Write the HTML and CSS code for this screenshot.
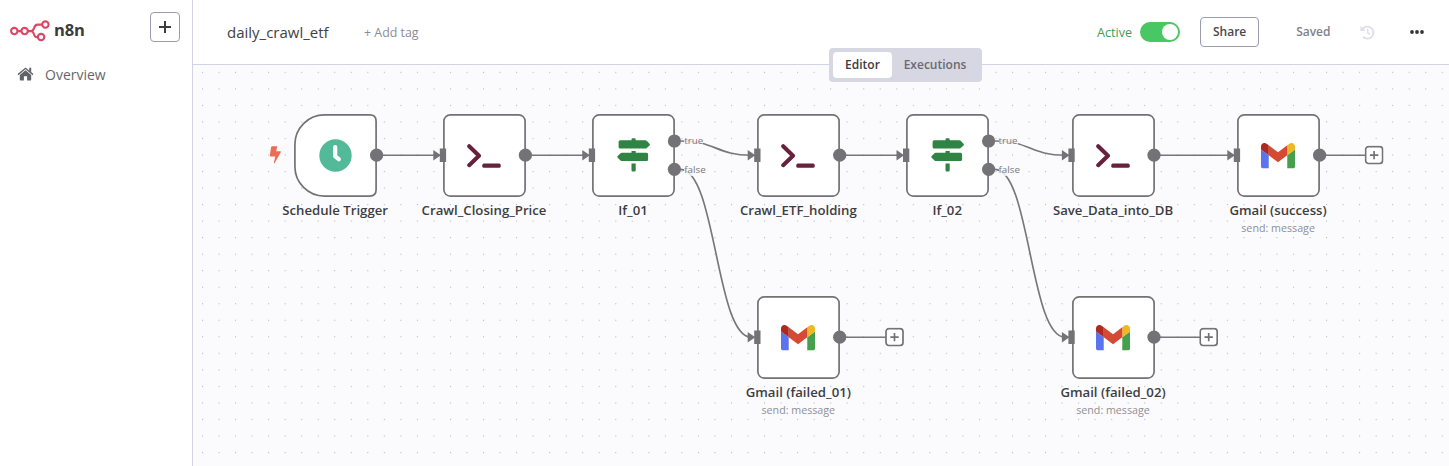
FILE: index.html
```html
<!DOCTYPE html>
<html lang="en">
<head>
<meta charset="utf-8">
<title>daily_crawl_etf - n8n</title>
<link rel="stylesheet" href="styles.css">
</head>
<body>
<svg class="defs" width="0" height="0" aria-hidden="true">
  <defs>
    <symbol id="code" viewBox="0 0 34 24"><path d="M2.2 2.2 12 11.8 2.2 21.2" fill="none" stroke="#66213c" stroke-width="4" stroke-linecap="round" stroke-linejoin="round"/><rect x="15.3" y="19.5" width="18.4" height="4.2" rx="1.5" fill="#66213c"/></symbol>
    <symbol id="signs" viewBox="0 0 33 34"><path fill="#2f8443" d="M14.5 2.2V1.4Q14.5.3 15.6.3h2q1.1 0 1.1 1.1v.8h9.6q.8 0 1.4.6l2.8 3q.8.9 0 1.8l-2.8 2.500q-.6.5-1.400.5H3.200q-1.600 0-1.600-1.600V3.800Q1.600 2.200 3.200 2.200zM14.500 14.700v-1.800h4.200v1.800h10.800q1.600 0 1.600 1.600v5.100q0 1.600-1.600 1.600H4.900q-.8 0-1.400-.6L.7 19.700q-.8-.9 0-1.800l2.800-2.600q.6-.6 1.400-.6zM14.500 25.500h4.200v6.800q0 1.300-1.300 1.300h-1.600q-1.300 0-1.300-1.300z"/></symbol>
    <symbol id="gmail" viewBox="52 42 88 66"><path fill="#5b74ee" d="M58 108h14V74L52 59v43c0 3.320 2.690 6 6 6"/><path fill="#459f4c" d="M120 108h14c3.320 0 6-2.690 6-6V59l-20 15"/><path fill="#edb824" d="M120 48v26l20-15v-8c0-7.420-8.470-11.650-14.400-7.200"/><path fill="#d54a34" d="M72 74V48l24 18 24-18v26L96 92"/><path fill="#ae2a20" d="M52 51v8l20 15V48l-5.600-4.200c-5.940-4.450-14.400-.22-14.400 7.200"/></symbol>
    <symbol id="clock" viewBox="0 0 33 33"><circle cx="16.500" cy="16.500" r="16.200" fill="#52ba98"/><path d="M16.200 8v9.300l3.600 2.900" fill="none" stroke="#fff" stroke-width="4.200" stroke-linecap="round" stroke-linejoin="round"/></symbol>
    <symbol id="box" viewBox="0 0 83 83"><rect x=".9" y=".9" width="81.200" height="81.200" rx="6.300" fill="#fff" stroke="#727277" stroke-width="1.700"/></symbol>
    <symbol id="trigger-box" viewBox="0 0 83 83"><path d="M30.500.9h45.300q6.300 0 6.300 6.300v68.600q0 6.300-6.300 6.300H30.500A29.600 29.600 0 0 1 .9 52.500v-22A29.600 29.600 0 0 1 30.500.9z" fill="#fff" stroke="#727277" stroke-width="1.700"/></symbol>
    <symbol id="input" viewBox="0 0 14 14" overflow="visible"><path d="M.5 1.800 7 6.200V.2h6.300v13.600H7v-6L.5 12.200z" fill="#727277"/></symbol>
    <symbol id="add" viewBox="0 0 19 19"><rect x="1" y="1" width="17" height="17" rx="3" fill="#fff" stroke="#727277" stroke-width="1.700"/><path d="M9.500 5.300v8.400M5.300 9.500h8.400" stroke="#727277" stroke-width="1.700"/></symbol>
    <pattern id="dots" x="202" y="71.800" width="16.530" height="16.530" patternUnits="userSpaceOnUse"><circle cx=".6" cy=".6" r=".55" fill="#a2a3ac"/></pattern>
  </defs>
</svg>
<div class="app">
  <aside class="sidebar">
    <div class="brand-row">
      <div class="brand">
        <svg width="40" height="22" viewBox="0 0 40 22" fill="none" stroke="#dc4767" stroke-width="2.100"><circle cx="4.300" cy="11.100" r="3.200"/><circle cx="14.600" cy="11.100" r="3.200"/><circle cx="35.400" cy="4.600" r="3.200"/><circle cx="31.100" cy="17.100" r="3.200"/><path d="M7.600 11.100h3.700M17.900 11.100h3.200c3.800 0 2-6.500 6.400-6.500H32M21.100 11.100c3.700 0 2 6 5.400 6h1.300"/></svg>
        <span class="brand-name">n8n</span>
      </div>
      <button class="new-button"><svg width="14" height="14" viewBox="0 0 14 14"><path d="M7 1v12M1 7h12" stroke="#3d3d40" stroke-width="2"/></svg></button>
    </div>
    <a class="nav-item">
      <svg width="17" height="14" viewBox="0 0 17 14" fill="#626369"><path d="M8.500 3.200 14.200 8v4.800q0 .7-.7.700h-3.400V9.200H6.900v4.300H3.500q-.7 0-.7-.7V8z"/><path d="M1 7.600 8.500 1.300l7.500 6.300" fill="none" stroke="#626369" stroke-width="1.400"/><path d="M12.200.8h2v4.600l-2-1.700z"/></svg>
      <span>Overview</span>
    </a>
  </aside>
  <main class="main">
    <header class="header">
      <span class="title">daily_crawl_etf</span>
      <span class="add-tag">+ Add tag</span>
      <div class="actions">
        <span class="active-label">Active</span>
        <span class="toggle"><span class="knob"></span></span>
        <button class="share">Share</button>
        <span class="saved">Saved</span>
        <svg class="history" width="15" height="15" viewBox="0 0 15 15" fill="none" stroke="#dddee8"><path d="M2.700 3.900A6 6 0 1 1 3 11.700" stroke-width="1.900"/><path d="M.5 1v5h5z" fill="#dddee8" stroke="none"/><path d="M7.700 4v3.900l2.200 1.500" stroke-width="1.500"/></svg>
        <svg class="more" width="14" height="4" viewBox="0 0 14 4" fill="#363638"><circle cx="2" cy="2" r="1.900"/><circle cx="7" cy="2" r="1.900"/><circle cx="12" cy="2" r="1.900"/></svg>
      </div>
      <nav class="tabs"><span class="tab tab-current">Editor</span><span class="tab">Executions</span></nav>
    </header>
    <section class="canvas">
      <svg class="layer" viewBox="193 65 1256 401">
        <rect x="193" y="65" width="1256" height="401" fill="url(#dots)"/>
        <g fill="none" stroke="#77777b" stroke-width="1.650">
          <path d="M377 155.200h60M526 155.200h60M840 155.200h60M1154 155.200h77M1320 155.200h46M840 337.200h46M1154 337.200h46"/>
          <path d="M674.500 141h6C716 141 716 155.200 751 155.200M989 141h6C1030 141 1030 155.200 1065 155.200"/>
          <path d="M674.500 169.300h6C716 169.300 716 337.200 751 337.200M989 169.300h6C1030 169.300 1030 337.200 1065 337.200"/>
        </g>
      </svg>
      <span class="edge-label true-1">true</span>
      <span class="edge-label false-1">false</span>
      <span class="edge-label true-2">true</span>
      <span class="edge-label false-2">false</span>

      <div class="node n1"><svg class="frame"><use href="#trigger-box"/></svg><svg class="icon clock"><use href="#clock"/></svg><b class="name">Schedule Trigger</b></div>
      <div class="node n2"><svg class="frame"><use href="#box"/></svg><svg class="icon code"><use href="#code"/></svg><b class="name">Crawl_Closing_Price</b></div>
      <div class="node n3"><svg class="frame"><use href="#box"/></svg><svg class="icon signs"><use href="#signs"/></svg><b class="name">If_01</b></div>
      <div class="node n4"><svg class="frame"><use href="#box"/></svg><svg class="icon code"><use href="#code"/></svg><b class="name">Crawl_ETF_holding</b></div>
      <div class="node n5"><svg class="frame"><use href="#box"/></svg><svg class="icon signs"><use href="#signs"/></svg><b class="name">If_02</b></div>
      <div class="node n6"><svg class="frame"><use href="#box"/></svg><svg class="icon code"><use href="#code"/></svg><b class="name">Save_Data_into_DB</b></div>
      <div class="node n7"><svg class="frame"><use href="#box"/></svg><svg class="icon gmail"><use href="#gmail"/></svg><b class="name">Gmail (success)</b><span class="sub">send: message</span></div>
      <div class="node n8"><svg class="frame"><use href="#box"/></svg><svg class="icon gmail"><use href="#gmail"/></svg><b class="name">Gmail (failed_01)</b><span class="sub">send: message</span></div>
      <div class="node n9"><svg class="frame"><use href="#box"/></svg><svg class="icon gmail"><use href="#gmail"/></svg><b class="name">Gmail (failed_02)</b><span class="sub">send: message</span></div>

      <svg class="layer" viewBox="193 65 1256 401">
        <g fill="#727277">
          <circle cx="376.600" cy="155.200" r="6.600"/><circle cx="525.400" cy="155.200" r="6.600"/>
          <circle cx="674.400" cy="141" r="6.600"/><circle cx="674.400" cy="169.300" r="6.600"/>
          <circle cx="839.700" cy="155.200" r="6.600"/>
          <circle cx="988.600" cy="141" r="6.600"/><circle cx="988.600" cy="169.300" r="6.600"/>
          <circle cx="1154" cy="155.200" r="6.600"/><circle cx="1319.600" cy="155.200" r="6.600"/>
          <circle cx="839.700" cy="337.200" r="6.600"/><circle cx="1154" cy="337.200" r="6.600"/>
        </g>
        <use href="#input" x="432.800" y="148.200" width="14" height="14"/>
        <use href="#input" x="581.800" y="148.200" width="14" height="14"/>
        <use href="#input" x="747.200" y="148.200" width="14" height="14"/>
        <use href="#input" x="896" y="148.200" width="14" height="14"/>
        <use href="#input" x="1061.400" y="148.200" width="14" height="14"/>
        <use href="#input" x="1226.800" y="148.200" width="14" height="14"/>
        <use href="#input" x="747.200" y="330.200" width="14" height="14"/>
        <use href="#input" x="1061.400" y="330.200" width="14" height="14"/>
        <use href="#add" x="1364.600" y="145.600" width="19" height="19"/>
        <use href="#add" x="885" y="327.600" width="19" height="19"/>
        <use href="#add" x="1199.200" y="327.600" width="19" height="19"/>
        <path d="M272.200 146.200h5.200l-1.300 5h4.200q.9.200.5 1l-6.100 10.700q-.8.700-.8-.3l1.400-6.200h-4.800q-.9-.1-.7-1l1.300-8.500q.2-.7 1.100-.7z" fill="#ee6c54"/>
      </svg>
    </section>
  </main>
</div>
</body>
</html>
```
FILE: styles.css
```css
* { box-sizing: border-box; }
body { margin: 0; font-family: "Open Sans", "Noto Sans", sans-serif; color: #414244; background: #fff; overflow: hidden; }
button { font: inherit; background: #fff; padding: 0; border: 1px solid #9a9bb0; border-radius: 4px; }
.defs { position: absolute; }
.app { display: flex; height: 466px; }

.sidebar { width: 193px; flex: none; border-right: 1px solid #d2d3e4; padding: 12px 12px 0 10px; }
.brand-row { display: flex; justify-content: space-between; align-items: flex-start; height: 42px; }
.brand { display: flex; align-items: center; gap: 4px; padding-top: 5px; height: 32px; }
.brand-name { font-size: 16.5px; font-weight: 700; color: #3b3b3e; line-height: 24px; padding-bottom: 2px; letter-spacing: -.1px; }
.new-button { width: 30px; height: 30px; display: flex; align-items: center; justify-content: center; }
.nav-item { display: flex; align-items: center; gap: 11px; height: 40px; padding-left: 7px; font-size: 14px; color: #66676d; }

.main { flex: 1; display: flex; flex-direction: column; }
.header { position: relative; height: 65px; flex: none; border-bottom: 1px solid #d2d3e4; display: flex; align-items: center; padding: 0 25px 0 34px; }
.title { width: 137px; font-size: 15px; color: #414244; }
.add-tag { font-size: 12.400px; font-weight: 500; color: #8b8c93; }
.actions { margin-left: auto; display: flex; align-items: center; font-size: 12px; font-weight: 500; }
.active-label { color: #3f9b58; font-size: 12.600px; }
.toggle { width: 40px; height: 20px; border-radius: 10px; background: #48c763; margin: 0 20px 0 8px; display: flex; align-items: center; justify-content: flex-end; padding-right: 2px; }
.knob { width: 16px; height: 16px; border-radius: 50%; background: #fff; }
.share { width: 59px; height: 30px; padding-bottom: 1px; font-weight: 600; color: #48494c; }
.saved { margin-left: 37px; padding-bottom: 1px; color: #818289; font-weight: 600; }
.history { margin-left: 29px; }
.more { margin-left: 35.500px; }
.tabs { position: absolute; left: 636px; top: 48px; z-index: 2; width: 153px; height: 34px; padding: 4px; display: flex; border-radius: 4px; background: #d6d7e3; font-size: 12px; font-weight: 600; }
.tab { flex: 1; display: flex; align-items: center; justify-content: center; padding-bottom: 2px; color: #696a71; }
.tab-current { flex: 0 0 59px; border-radius: 4px; background: #fff; color: #3b3c3f; }

.canvas { position: relative; flex: 1; background: #fbfbfe; }
.layer { position: absolute; left: 0; top: 0; width: 1256px; height: 401px; }
.node { position: absolute; top: 49px; width: 83px; display: flex; flex-direction: column; align-items: center; }
.frame { width: 83px; height: 83px; flex: none; }
.icon { position: absolute; }
.clock { left: 25px; top: 25px; width: 33px; height: 33px; }
.code { left: 24px; top: 30px; width: 34px; height: 24px; }
.signs { left: 25px; top: 24px; width: 33px; height: 34px; }
.gmail { left: 24px; top: 29px; width: 34px; height: 25.500px; }
.name { margin-top: 3px; font-size: 13.200px; line-height: 20px; font-weight: 600; white-space: nowrap; color: #3d3e42; }
.sub { font-size: 10.700px; line-height: 16px; white-space: nowrap; color: #8e8f95; }
.n1 { left: 100.600px; }
.n2 { left: 249.500px; }
.n3 { left: 398.500px; }
.n4 { left: 563.800px; }
.n5 { left: 712.700px; }
.n6 { left: 878.500px; }
.n7 { left: 1043.600px; }
.n8 { left: 563.800px; top: 231px; }
.n9 { left: 878.500px; top: 231px; }
.edge-label { position: absolute; font-size: 9.800px; line-height: 12px; color: #77787e; background: #fbfbfecc; }
.true-1, .false-1 { left: 491.300px; }
.true-2, .false-2 { left: 805.500px; }
.true-1, .true-2 { top: 70px; }
.false-1, .false-2 { top: 98.500px; }
```
